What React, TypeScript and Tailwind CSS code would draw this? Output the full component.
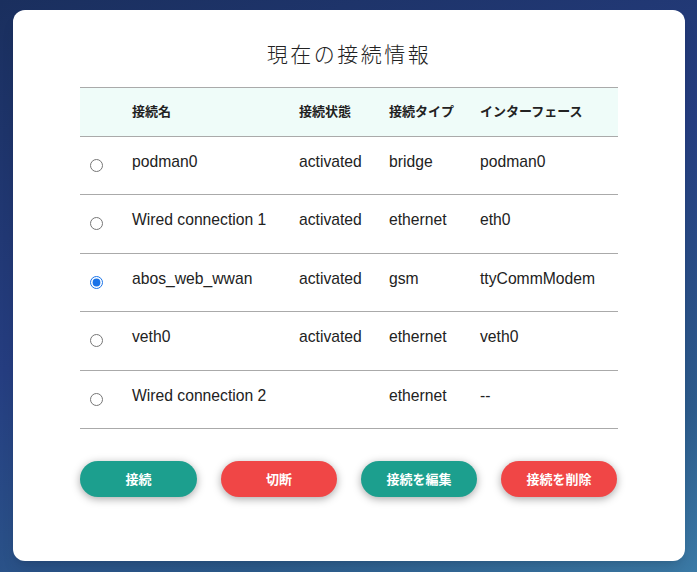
import React, { useState } from "react";

type Connection = {
  name: string;
  state: string;
  type: string;
  iface: string;
};

const connections: Connection[] = [
  { name: "podman0", state: "activated", type: "bridge", iface: "podman0" },
  { name: "Wired connection 1", state: "activated", type: "ethernet", iface: "eth0" },
  { name: "abos_web_wwan", state: "activated", type: "gsm", iface: "ttyCommModem" },
  { name: "veth0", state: "activated", type: "ethernet", iface: "veth0" },
  { name: "Wired connection 2", state: "", type: "ethernet", iface: "--" },
];

const jp = "font-['Noto_Sans_CJK_JP',sans-serif]";

export default function App() {
  const [selected, setSelected] = useState(2);

  return (
    <div className="h-[572px] w-[697px] overflow-hidden bg-[linear-gradient(160deg,#1a2f5e_0%,#253d80_45%,#2c5b8c_80%,#3b7aa6_100%)] px-[13px] pt-[10px]">
      <div className="h-[551px] w-[672px] rounded-xl bg-white pt-[28px] shadow-lg">
        <h1
          className={`text-center text-[21px] font-light tracking-[2.5px] text-[#222] ${jp}`}
        >
          現在の接続情報
        </h1>

        <table className="mx-[67px] mt-[17px] w-[538px] border-collapse font-['Liberation_Sans',Arial,sans-serif] text-[15.7px] text-[#222]">
          <thead>
            <tr className={`h-[49px] border-y border-[#aaa] bg-[#effcf9] text-left text-[13px] font-bold ${jp}`}>
              <th className="w-[52px]" />
              <th className="w-[167px] pb-[2px] font-bold">接続名</th>
              <th className="w-[90px] pb-[2px] font-bold">接続状態</th>
              <th className="w-[91px] pb-[2px] font-bold">接続タイプ</th>
              <th className="pb-[2px] font-bold">インターフェース</th>
            </tr>
          </thead>
          <tbody>
            {connections.map((c, i) => (
              <tr key={c.name} className="h-[58.5px] border-b border-[#aaa]">
                <td className="pl-[10px]">
                  <input
                    type="radio"
                    name="conn"
                    checked={selected === i}
                    onChange={() => setSelected(i)}
                    className="block h-[13px] w-[13px] accent-[#1a73e8]"
                  />
                </td>
                <td className="pb-[7px]">{c.name}</td>
                <td className="pb-[7px]">{c.state}</td>
                <td className="pb-[7px]">{c.type}</td>
                <td className="pb-[7px]">{c.iface}</td>
              </tr>
            ))}
          </tbody>
        </table>

        <div className={`mx-[67px] mt-[32px] flex gap-[24px] text-[13px] font-bold text-white ${jp}`}>
          <button className="h-[36px] w-[117px] rounded-full bg-[#1c9f8e] shadow-[0_2px_8px_rgba(0,0,0,0.35)]">
            接続
          </button>
          <button className="h-[36px] w-[116px] rounded-full bg-[#f04646] shadow-[0_2px_8px_rgba(0,0,0,0.35)]">
            切断
          </button>
          <button className="h-[36px] w-[116px] rounded-full bg-[#1c9f8e] shadow-[0_2px_8px_rgba(0,0,0,0.35)]">
            接続を編集
          </button>
          <button className="h-[36px] w-[116px] rounded-full bg-[#f04646] shadow-[0_2px_8px_rgba(0,0,0,0.35)]">
            接続を削除
          </button>
        </div>
      </div>
    </div>
  );
}
